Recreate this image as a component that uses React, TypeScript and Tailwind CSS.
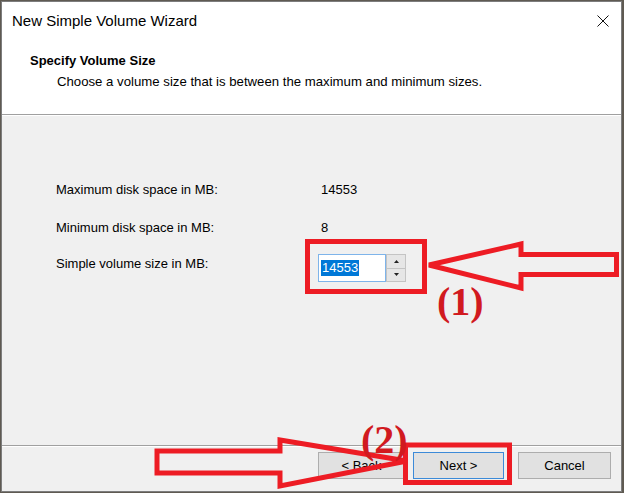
import React from "react";

const font = { fontFamily: '"Liberation Sans", Arial, sans-serif' };

function Spinner() {
  return (
    <div className="flex flex-col w-[20px] h-[28px]">
      <div className="flex-1 flex items-center justify-center bg-[#e6e6e6] border border-[#c4c4c4]">
        <svg width="5" height="3" viewBox="0 0 5 3">
          <path d="M2.5 0 L5 3 L0 3 Z" fill="#222" />
        </svg>
      </div>
      <div className="flex-1 flex items-center justify-center bg-[#e6e6e6] border border-t-0 border-[#c4c4c4]">
        <svg width="5" height="3" viewBox="0 0 5 3">
          <path d="M0 0 L5 0 L2.5 3 Z" fill="#222" />
        </svg>
      </div>
    </div>
  );
}

function Btn({ label, w, primary }: { label: string; w: string; primary?: boolean }) {
  return (
    <button
      className={`h-[27px] ${w} text-[13px] text-black bg-[#e1e1e1] border ${
        primary ? "border-[#3c8ad8]" : "border-[#adadad]"
      }`}
    >
      {label}
    </button>
  );
}

export default function App() {
  return (
    <div className="relative w-[624px] h-[493px] bg-[#5f5a52] pl-[1px] pt-[1px] overflow-hidden" style={font}>
      {/* wizard window */}
      <div className="w-[621px] h-[491px] border border-[#7d7d7d] bg-[#f0f0f0] flex flex-col">
        {/* header */}
        <div className="h-[112px] bg-white flex flex-col">
          <div className="h-[38px] flex items-center justify-between pl-[10px] pr-[12px]">
            <span className="text-[15px] text-black">New Simple Volume Wizard</span>
            <svg width="12" height="12" viewBox="0 0 12 12">
              <path d="M0.5 0.5 L11.5 11.5 M11.5 0.5 L0.5 11.5" stroke="#111" strokeWidth="1" />
            </svg>
          </div>
          <div className="pl-[28px] mt-[13px] text-[13px] leading-[16px] font-bold text-black">Specify Volume Size</div>
          <div className="pl-[55px] mt-[5px] text-[13.2px] leading-[16px] text-black">
            Choose a volume size that is between the maximum and minimum sizes.
          </div>
        </div>
        <div className="h-[1px] bg-[#a0a0a0]" />
        <div className="h-[1px] bg-white" />

        {/* body */}
        <div className="flex-1 pl-[54px] pt-[66px] text-[13px] leading-[16px] text-black">
          <div className="flex">
            <div className="w-[265px]">Maximum disk space in MB:</div>
            <div>14553</div>
          </div>
          <div className="flex mt-[22px]">
            <div className="w-[265px]">Minimum disk space in MB:</div>
            <div>8</div>
          </div>
          <div className="flex mt-[18px]">
            <div className="w-[262px] pt-[2px]">Simple volume size in MB:</div>
            <div className="flex">
              <div className="w-[68px] h-[28px] bg-white border border-[#7eb4ea] flex items-center pl-[2px]">
                <span className="bg-[#0078d7] text-white px-[1px]">14553</span>
              </div>
              <Spinner />
            </div>
          </div>
        </div>

        {/* footer */}
        <div className="h-[1px] bg-[#a0a0a0]" />
        <div className="h-[1px] bg-white" />
        <div className="h-[44px] flex justify-end items-start pt-[5px] pr-[10px]">
          <Btn label="< Back" w="w-[87px]" />
          <div className="w-[8px]" />
          <Btn label="Next >" w="w-[91px]" primary />
          <div className="w-[14px]" />
          <Btn label="Cancel" w="w-[93px]" />
        </div>
      </div>

      {/* annotations drawn over the dialog */}
      <svg className="absolute left-0 top-0 pointer-events-none" width="624" height="493" viewBox="0 0 624 493">
        <rect x="307.5" y="241.5" width="117" height="50" fill="none" stroke="#ed1c24" strokeWidth="5" />
        <polygon
          points="429,265 521,244 521,254.5 616.5,254.5 616.5,274.5 521,274.5 521,288"
          fill="none"
          stroke="#ed1c24"
          strokeWidth="5"
          strokeLinejoin="miter"
        />
        <rect x="405.5" y="445" width="104" height="37.5" fill="none" stroke="#ed1c24" strokeWidth="5" />
        <polygon
          points="157,451 280,451 280,440 407,461 280,486 280,473 157,473"
          fill="none"
          stroke="#ed1c24"
          strokeWidth="5"
          strokeLinejoin="miter"
        />
      </svg>
      <div
        className="absolute left-[437px] top-[282px] text-[40px] leading-none font-bold text-[#d11a1f]"
        style={{ fontFamily: '"Liberation Serif", "Times New Roman", serif' }}
      >
        (1)
      </div>
      <div
        className="absolute left-[361px] top-[420px] text-[40px] leading-none font-bold text-[#d11a1f]"
        style={{ fontFamily: '"Liberation Serif", "Times New Roman", serif' }}
      >
        (2)
      </div>
    </div>
  );
}
